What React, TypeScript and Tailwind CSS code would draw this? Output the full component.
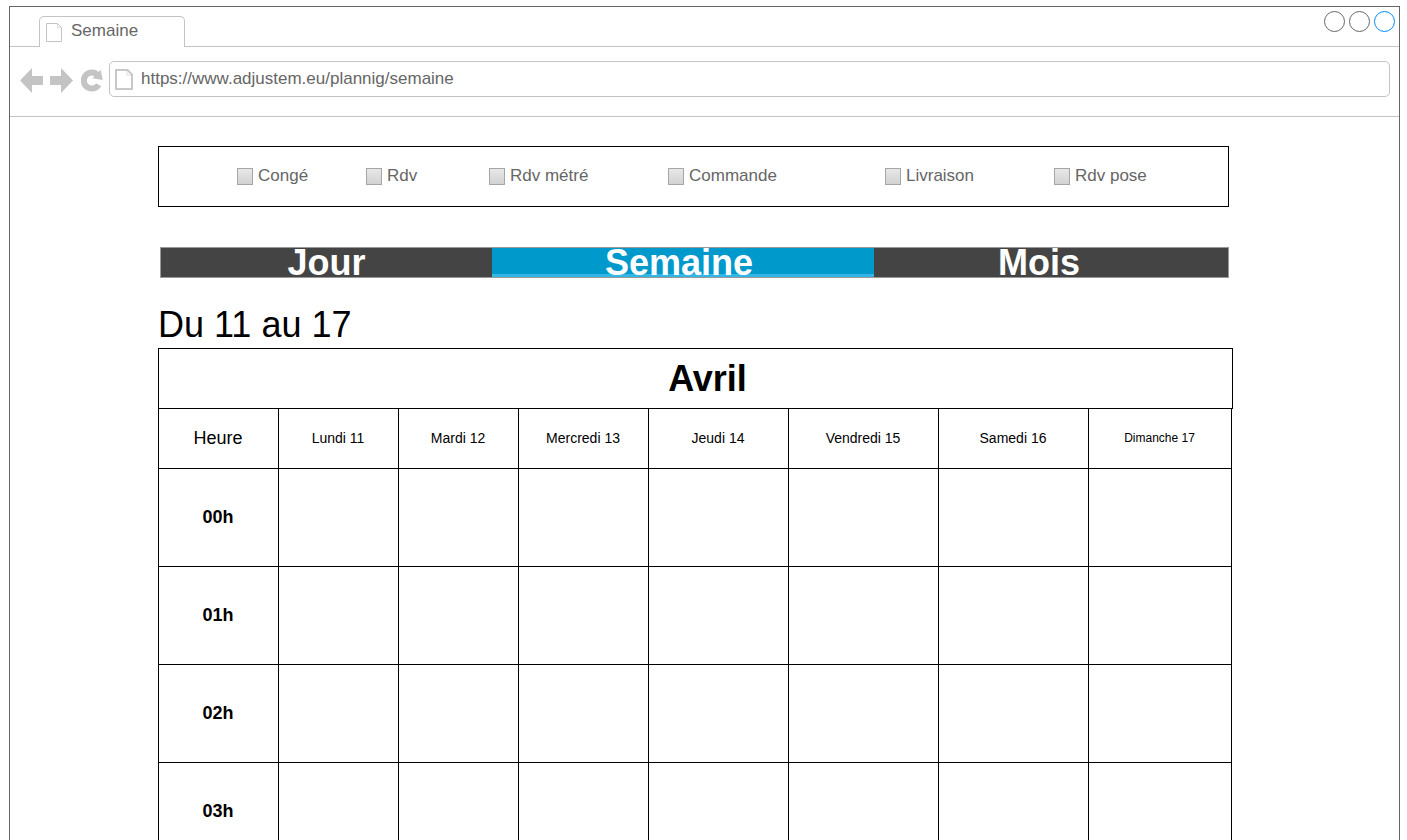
import { useState } from "react";

const filters = ["Congé", "Rdv", "Rdv métré", "Commande", "Livraison", "Rdv pose"];

const days = [
  { label: "Lundi 11", size: "text-sm" },
  { label: "Mardi 12", size: "text-sm" },
  { label: "Mercredi 13", size: "text-sm" },
  { label: "Jeudi 14", size: "text-sm" },
  { label: "Vendredi 15", size: "text-sm" },
  { label: "Samedi 16", size: "text-sm" },
  { label: "Dimanche 17", size: "text-xs" },
];

const hours = ["00h", "01h", "02h", "03h"];

const views = [
  { label: "Jour", pad: "" },
  { label: "Semaine", pad: "pr-2" },
  { label: "Mois", pad: "pr-6" },
];

function TabPageIcon() {
  return (
    <svg width="16" height="19" viewBox="0 0 16 19" fill="none" stroke="#c4c4c4" aria-hidden="true">
      <path d="M.5.5h11l4 4v14H.5z" />
      <path d="M11.5.5v4h4" stroke="#dddddd" />
    </svg>
  );
}

function AddressPageIcon() {
  return (
    <svg width="18" height="21" viewBox="0 0 18 21" aria-hidden="true">
      <path d="M1 1h11.5l4.5 4.5V20H1z" fill="white" stroke="#c8c8c8" strokeWidth="2" />
      <path d="M12 2v4h4" fill="none" stroke="#dddddd" />
    </svg>
  );
}

function ArrowIcon({ flip = false }: { flip?: boolean }) {
  return (
    <svg width="23" height="25" viewBox="0 0 23 25" fill="#c4c4c4" aria-hidden="true">
      {flip ? (
        <path d="M23 12.5 11 0v8H0v9h11v8z" />
      ) : (
        <path d="M0 12.5 12 0v8h11v9H12v8z" />
      )}
    </svg>
  );
}

function ReloadIcon() {
  return (
    <svg width="22" height="23" viewBox="0 0 22 23" aria-hidden="true">
      <path d="M17.7 15.7A8 8 0 1 1 16.6 6" fill="none" stroke="#c4c4c4" strokeWidth="6" />
      <path d="M19.7.8 21.7 11 11.5 9.3z" fill="#c4c4c4" />
    </svg>
  );
}

export default function App() {
  const [view, setView] = useState("Semaine");

  return (
    <div className="flex min-h-screen flex-col bg-white pt-[6px] pr-[7px] pl-[9px] font-['Liberation_Sans',Arial,sans-serif]">
      <div className="grow border border-b-0 border-[#666666]">
        <header>
          <div className="flex h-10 items-end justify-between border-b border-[#c4c4c4] pr-1 pl-[29px]">
            <div className="-mb-px flex h-[31px] w-[146px] items-start rounded-t-[5px] border border-b-0 border-[#c4c4c4] bg-white pt-[6px] pl-[6px]">
              <TabPageIcon />
              <span className="-mt-[2px] ml-[9px] text-[17px] leading-5 text-[#666666]">Semaine</span>
            </div>
            <div className="flex gap-1 self-start pt-1">
              <button aria-label="Réduire" className="size-[21px] rounded-full border border-[#666666]" />
              <button aria-label="Agrandir" className="size-[21px] rounded-full border border-[#666666]" />
              <button aria-label="Fermer" className="size-[21px] rounded-full border border-[#008cff]" />
            </div>
          </div>
          <div className="flex h-[70px] items-start border-b border-[#c4c4c4] pt-[14px] pr-[9px] pl-[10px]">
            <div className="flex h-[38px] items-center gap-[7px]">
              <button aria-label="Page précédente"><ArrowIcon /></button>
              <button aria-label="Page suivante"><ArrowIcon flip /></button>
              <button aria-label="Actualiser" className="ml-px"><ReloadIcon /></button>
            </div>
            <div className="ml-[6px] flex h-9 grow items-center gap-2 rounded-[5px] border border-[#c4c4c4] pl-[5px]">
              <AddressPageIcon />
              <input
                type="text"
                aria-label="Adresse"
                defaultValue="https://www.adjustem.eu/plannig/semaine"
                className="h-8 grow bg-transparent text-[17px] text-[#666666] outline-none"
              />
            </div>
          </div>
        </header>

        <main className="pt-[29px] pr-[166px] pl-[148px]">
          <div className="mr-1 grid h-[61px] grid-cols-[129fr_123fr_179fr_217fr_169fr_174fr] items-center border border-black pb-[2px] pl-[78px]">
            {filters.map((label) => (
              <label key={label} className="flex items-center gap-[5px] text-[17px] leading-5 whitespace-nowrap text-[#666666]">
                <input
                  type="checkbox"
                  className="mt-px h-[17px] w-4 appearance-none border border-[#a6a6a6] bg-linear-to-b from-[#e8e8e8] to-[#d2d2d2] checked:from-[#0099cc] checked:to-[#0099cc]"
                />
                {label}
              </label>
            ))}
          </div>

          <nav className="mt-10 mr-1 ml-[2px] grid grid-cols-[331fr_382fr_354fr] border border-[#999999] bg-[#444444]">
            {views.map(({ label, pad }) => (
              <button
                key={label}
                onClick={() => setView(label)}
                className={`h-[29px] text-4xl leading-[29px] font-bold text-white ${pad} ${
                  view === label ? "bg-[#0099cc] shadow-[inset_0_-3px_0_#33b5e5]" : ""
                }`}
              >
                {label}
              </button>
            ))}
          </nav>

          <h1 className="mt-[25px] pb-px text-4xl leading-[44px]">Du 11 au 17</h1>

          <h2 className="flex h-[61px] items-center justify-center border border-black pl-6 text-4xl font-bold">
            Avril
          </h2>
          <div className="-mt-px pr-px">
            <table className="w-full table-fixed border-collapse text-center">
              <colgroup>
                <col className="w-[120px]" />
                <col className="w-[120px]" />
                <col className="w-[120px]" />
                <col className="w-[130px]" />
                <col className="w-[140px]" />
                <col className="w-[150px]" />
                <col className="w-[150px]" />
                <col className="w-[143px]" />
              </colgroup>
              <thead>
                <tr className="h-[60px]">
                  <th scope="col" className="border border-black pr-px pb-[2px] text-lg font-normal">Heure</th>
                  {days.map(({ label, size }) => (
                    <th key={label} scope="col" className={`border border-black pr-px pb-[2px] font-normal ${size}`}>
                      {label}
                    </th>
                  ))}
                </tr>
              </thead>
              <tbody>
                {hours.map((hour) => (
                  <tr key={hour} className="h-[98px]">
                    <th scope="row" className="border border-black pr-px pb-[2px] text-lg font-bold">{hour}</th>
                    {days.map(({ label }) => (
                      <td key={label} className="border border-black" />
                    ))}
                  </tr>
                ))}
              </tbody>
            </table>
          </div>
        </main>
      </div>
    </div>
  );
}
